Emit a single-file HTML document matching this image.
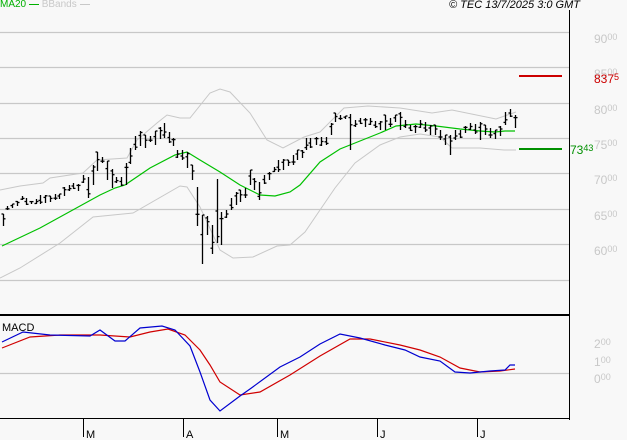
<!DOCTYPE html>
<html><head><meta charset="utf-8"><style>
html,body{margin:0;padding:0;background:#f8f8f8;}
body{width:627px;height:440px;overflow:hidden;position:relative;font-family:"Liberation Sans",sans-serif;}
.lbl{position:absolute;left:594px;font-size:12px;color:#c8c8c8;line-height:12px;}
.lbl small{font-size:9px;vertical-align:top;line-height:9px;}
</style></head><body>
<svg width="627" height="440" style="position:absolute;left:0;top:0" xmlns="http://www.w3.org/2000/svg">
<g stroke="#c8c8c8" stroke-width="1.2">
<line x1="0" y1="32.5" x2="569" y2="32.5"/><line x1="0" y1="67.5" x2="569" y2="67.5"/>
<line x1="0" y1="103.5" x2="569" y2="103.5"/><line x1="0" y1="138.5" x2="569" y2="138.5"/>
<line x1="0" y1="173.5" x2="569" y2="173.5"/><line x1="0" y1="209.5" x2="569" y2="209.5"/>
<line x1="0" y1="244.5" x2="569" y2="244.5"/><line x1="0" y1="280.5" x2="569" y2="280.5"/>
<line x1="0" y1="373.5" x2="569" y2="373.5"/>
</g>
<g fill="none" stroke="#c8c8c8" stroke-width="1">
<polyline points="0,190 20,186 43,183 50,178 83,173 97,160 127,158 137,140 157,123 167,115 180,118 190,118 210,93 220,89 230,92 250,113 267,140 283,148 304,137 320,132 344,108 368,106 400,108 432,113 452,110 496,119 516,112"/>
<polyline points="0,278 20,268 60,243 93,217 133,213 180,186 187,187 200,207 220,250 233,258 253,257 277,246 290,245 305,232 320,210 335,188 355,163 380,145 400,137 420,134 440,137 452,148 480,148 504,150 516,150"/>
</g>
<polyline fill="none" stroke="#00c000" stroke-width="1.2" points="2,246 40,228 100,195 115,188 125,185 150,168 175,155 187,152 200,160 220,172 240,185 260,195 275,196 290,192 300,185 320,162 340,149 360,141 380,133 396,126 416,124 436,126 460,129 480,131 495,132 505,131 515,131"/>
<g stroke="#000" stroke-width="1.3" id="bars"></g>
<line x1="519" y1="76" x2="562" y2="76" stroke="#cc0000" stroke-width="2"/>
<line x1="519" y1="149" x2="562" y2="149" stroke="#009000" stroke-width="2"/>
<line x1="569.5" y1="10" x2="569.5" y2="420" stroke="#000" stroke-width="1"/>
<line x1="0" y1="315" x2="569" y2="315" stroke="#000" stroke-width="2"/>
<line x1="0" y1="418.5" x2="569" y2="418.5" stroke="#000" stroke-width="1"/>
<g stroke="#000" stroke-width="1">
<line x1="83.5" y1="419" x2="83.5" y2="437"/><line x1="183.5" y1="419" x2="183.5" y2="437"/>
<line x1="277.5" y1="419" x2="277.5" y2="437"/><line x1="377.5" y1="419" x2="377.5" y2="437"/>
<line x1="477.5" y1="419" x2="477.5" y2="437"/>
</g>
<g font-size="11" fill="#000" font-family="Liberation Sans,sans-serif">
<text x="86" y="438">M</text><text x="186" y="438">A</text><text x="280" y="438">M</text><text x="380" y="438">J</text><text x="480" y="438">J</text>
<text x="2" y="331">MACD</text>
</g>
<polyline fill="none" stroke="#d00000" stroke-width="1.2" points="2,348 30,337 60,335 100,335 130,337 150,332 168,329 185,335 200,350 210,365 220,382 240,395 260,392 290,375 320,356 350,339 370,339 400,345 420,350 440,357 460,368 480,372 500,371 515,369"/>
<polyline fill="none" stroke="#0000d0" stroke-width="1.2" points="2,342 23,332 50,335 90,336 100,330 115,341 125,341 140,328 162,326 175,330 190,346 200,372 210,400 220,411 240,396 250,389 280,367 300,357 320,344 340,334 360,338 385,345 405,350 420,357 440,361 455,372 470,373 490,371 505,370 510,365 515,365"/>
</svg>
<div style="position:absolute;left:0;top:-1px;font-size:10px;line-height:12px;color:#00b000">MA20 <span style="display:inline-block;width:10px;height:1px;background:#00b000;vertical-align:middle"></span> <span style="color:#c8c8c8">BBands <span style="display:inline-block;width:10px;height:1px;background:#c8c8c8;vertical-align:middle"></span></span></div>
<div style="position:absolute;left:449px;top:-1px;font-size:11px;line-height:12px;font-style:italic;color:#000">© TEC 13/7/2025 3:0 GMT</div>
<div class="lbl" style="top:33px">90<small>00</small></div>
<div class="lbl" style="top:68px">85<small>00</small></div>
<div class="lbl" style="top:73px;color:#cc0000">837<small>5</small></div>
<div class="lbl" style="top:104px">80<small>00</small></div>
<div class="lbl" style="top:139px">75<small>00</small></div>
<div class="lbl" style="top:144px;left:570px;color:#009000">73<small>43</small></div>
<div class="lbl" style="top:174px">70<small>00</small></div>
<div class="lbl" style="top:210px">65<small>00</small></div>
<div class="lbl" style="top:245px">60<small>00</small></div>
<div class="lbl" style="top:338px">2<small>00</small></div>
<div class="lbl" style="top:356px">1<small>00</small></div>
<div class="lbl" style="top:373px">0<small>00</small></div>
<script>
var d=[[3,214,226],[7,206,210],[12,204,208],[17,201,206],[22,196,200],[26,198,205],[31,201,204],[36,199,204],[40,195,204],[45,195,203],[50,196,202],[55,194,200],[59,194,199],[64,187,196],[69,185,191],[73,183,189],[78,184,191],[83,175,183],[88,177,198],[93,165,185],[97,152,171],[102,157,163],[107,161,180],[112,169,188],[116,177,183],[121,177,186],[126,163,185],[130,148,164],[135,136,150],[140,131,146],[145,135,148],[150,136,142],[155,131,145],[160,127,139],[164,123,138],[169,132,143],[173,138,146],[177,150,158],[182,150,160],[187,152,168],[192,165,180],[197,187,226],[202,215,264],[207,216,235],[212,225,254],[217,179,243],[221,212,245],[226,210,218],[231,198,210],[236,192,205],[240,190,202],[245,188,198],[250,170,185],[254,178,190],[259,182,200],[264,175,184],[269,172,180],[274,167,172],[278,160,172],[283,159,170],[288,160,166],[293,155,165],[297,150,160],[302,150,158],[306,138,150],[310,138,148],[316,137,145],[321,137,146],[326,137,145],[331,123,135],[335,113,122],[340,115,120],[345,116,119],[350,114,150],[355,120,127],[360,118,124],[365,118,127],[370,118,125],[375,121,128],[380,121,130],[385,115,130],[390,118,127],[395,115,122],[400,112,130],[405,120,128],[410,125,131],[415,125,133],[420,120,128],[425,122,132],[430,125,135],[435,125,135],[440,130,140],[445,135,145],[450,135,155],[455,130,140],[460,130,138],[465,126,133],[470,123,130],[475,124,134],[480,122,140],[485,125,135],[490,128,138],[495,130,139],[500,126,136],[505,112,125],[510,109,117],[515,115,128]];
var g=document.getElementById('bars'),s='';
d.forEach(function(b,i){var x=b[0]+.5,o=b[1]+(b[2]-b[1])*((i*7)%10)/10,c=b[1]+(b[2]-b[1])*((i*3+4)%10)/10;
s+='<line x1="'+x+'" y1="'+b[1]+'" x2="'+x+'" y2="'+b[2]+'"/><line x1="'+(x-2)+'" y1="'+o+'" x2="'+x+'" y2="'+o+'"/><line x1="'+x+'" y1="'+c+'" x2="'+(x+2)+'" y2="'+c+'"/>';});
g.innerHTML=s;
</script>
</body></html>
